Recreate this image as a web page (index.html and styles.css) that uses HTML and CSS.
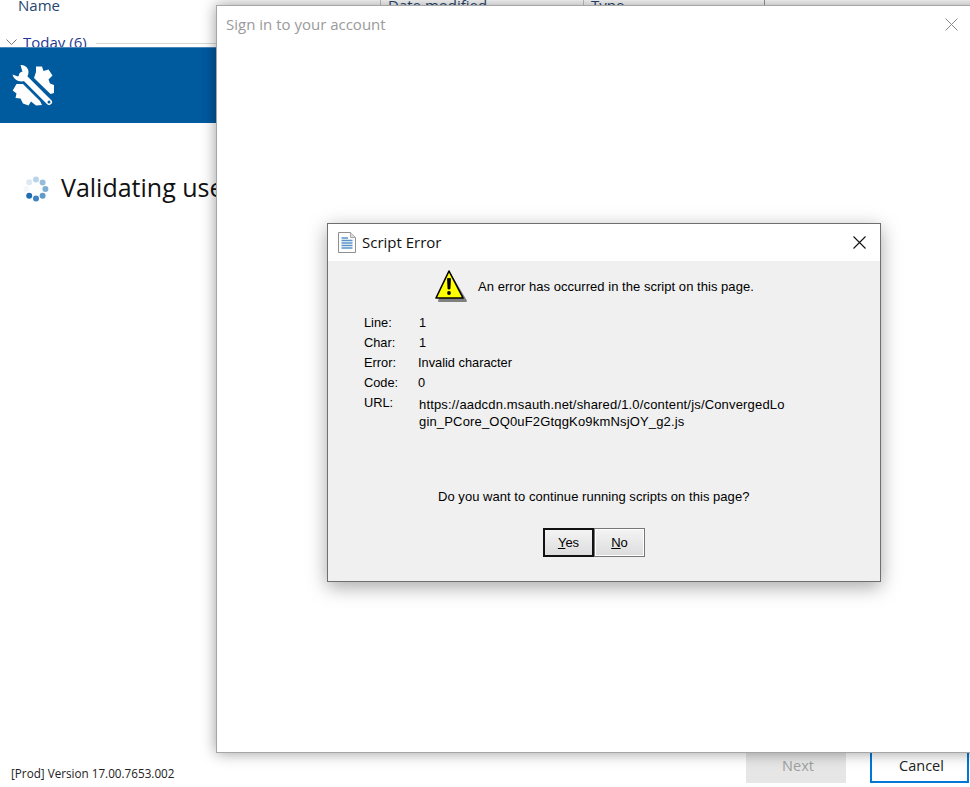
FILE: index.html
```html
<!DOCTYPE html>
<html lang="en">
<head>
<meta charset="utf-8">
<title>Script Error</title>
<link rel="stylesheet" href="styles.css">
</head>
<body>
<div class="desktop">
  <div class="app">
    <div class="explorer">
      <div class="columns">
        <span class="col col-name">Name</span>
        <span class="col col-date">Date modified</span>
        <span class="col col-type">Type</span>
      </div>
      <div class="group">
        <svg class="chevron" width="11" height="6" viewBox="0 0 11 6"><path d="M.5.5l5 5 5-5" fill="none" stroke="#777" stroke-width="1"/></svg>
        <span class="group-label">Today (6)</span>
        <span class="group-rule"></span>
      </div>
    </div>
    <header class="band">
      <svg class="tools" width="42" height="43" viewBox="0 0 42 43">
        <path d="M24 2.500H30L31.500 7L36.500 5.500L40.500 11.500L36.500 15.500L38 19.500L42 21V29L38.500 30L22 14L24 8Z" fill="#fff"/>
        <path d="M4.500 20L.7 26.500L4.500 29.500L3.500 34L8.500 34.500L11 39.500L16.500 41.500L19 37.500L24 41.500L30 41L28 37L11 20Z" fill="#fff"/>
        <path d="M10 11L37 38" stroke="#fff" stroke-width="6" stroke-linecap="round" fill="none"/>
        <path d="M8.500 1C12.500 .5 16.500 3.500 16.500 8C16.500 10 16 11 15.500 12L12.500 17C8 18.500 2 16.500 .5 10.500L6 12.500L10.500 8Z" fill="#fff"/>
        <circle cx="37" cy="38" r="1.500" fill="#005a9e"/>
      </svg>
    </header>
    <main class="status">
      <svg class="spinner" width="26" height="26" viewBox="0 0 26 26">
        <circle cx="3.300" cy="13" r="3" fill="#f4f8fb"/>
        <circle cx="6.200" cy="6.200" r="3" fill="#dce9f3"/>
        <circle cx="13" cy="3.500" r="3" fill="#b9d3e8"/>
        <circle cx="19.600" cy="6.400" r="3" fill="#95bcdc"/>
        <circle cx="22.400" cy="13" r="3" fill="#7eaed4"/>
        <circle cx="19.600" cy="19.800" r="3" fill="#5f9ac9"/>
        <circle cx="13" cy="22.600" r="3" fill="#3f84bf"/>
        <circle cx="6.200" cy="19.800" r="3" fill="#1f6cb0"/>
      </svg>
      <span class="status-text">Validating user</span>
    </main>
    <footer class="footer">
      <span class="version">[Prod] Version 17.00.7653.002</span>
      <div class="actions">
        <button class="btn btn-next" type="button">Next</button>
        <button class="btn btn-cancel" type="button">Cancel</button>
      </div>
    </footer>
  </div>

  <section class="signin">
    <div class="signin-bar">
      <span class="signin-title">Sign in to your account</span>
      <svg class="signin-close" width="13" height="13" viewBox="0 0 13 13"><path d="M.5.5l12 12M12.500.5l-12 12" stroke="#8a8a8a" stroke-width="1" fill="none"/></svg>
    </div>
  </section>

  <section class="dialog">
    <div class="dialog-bar">
      <svg class="doc" width="18" height="21" viewBox="0 0 18 21">
        <path d="M.5.500H12.500L17.500 5.500V20.500H.5Z" fill="#fdfdfd" stroke="#8f8f8f"/>
        <path d="M12.500.5V5.500H17.500" fill="#dcdcdc" stroke="#a8a8a8"/>
        <path d="M3.500 6H10M3.500 8.500H14.500M3.500 11H14.500M3.500 13.500H14.500M3.500 16H14.500" stroke="#5a93c8" stroke-width="1.400"/>
      </svg>
      <span class="dialog-title">Script Error</span>
      <svg class="dialog-close" width="13" height="13" viewBox="0 0 13 13"><path d="M.5.5l12 12M12.500.5l-12 12" stroke="#111" stroke-width="1.100" fill="none"/></svg>
    </div>
    <div class="dialog-body">
      <div class="message">
        <svg class="warn" width="34" height="34" viewBox="0 0 34 34">
          <path d="M15 5L31 32H4Z" fill="#808080" stroke="#808080" stroke-width="2" stroke-linejoin="round"/>
          <path d="M14 2L28 29H1Z" fill="#ffff00" stroke="#000" stroke-width="1.600" stroke-linejoin="round"/>
          <path d="M12.500 9.500H15.500L15 20H13Z" fill="#000" stroke="#000" stroke-width=".8"/>
          <circle cx="14" cy="24" r="1.900" fill="#000"/>
        </svg>
        <span class="message-text">An error has occurred in the script on this page.</span>
      </div>
      <dl class="details">
        <div class="row"><dt>Line:</dt><dd>1</dd></div>
        <div class="row"><dt>Char:</dt><dd>1</dd></div>
        <div class="row"><dt>Error:</dt><dd class="shift">Invalid character</dd></div>
        <div class="row"><dt>Code:</dt><dd class="shift">0</dd></div>
        <div class="row"><dt>URL:</dt><dd class="url">https://aadcdn.msauth.net/shared/1.0/content/js/ConvergedLogin_PCore_OQ0uF2GtqgKo9kmNsjOY_g2.js</dd></div>
      </dl>
      <p class="question">Do you want to continue running scripts on this page?</p>
      <div class="choices">
        <button class="choice choice-yes" type="button"><u>Y</u>es</button>
        <button class="choice choice-no" type="button"><u>N</u>o</button>
      </div>
    </div>
  </section>
</div>
</body>
</html>
```

FILE: styles.css
```css
* { box-sizing: border-box; }

html, body {
  margin: 0;
  height: 100%;
  background: #fff;
}

.desktop {
  position: relative;
  width: 970px;
  height: 787px;
  overflow: hidden;
  font-family: "Open Sans", "Noto Sans", sans-serif;
}

.app {
  display: flex;
  flex-direction: column;
  height: 787px;
}

.explorer {
  height: 47px;
  overflow: hidden;
  flex: none;
}

.columns {
  display: flex;
  height: 14px;
  margin-top: -5px;
  font-size: 15px;
  line-height: 20px;
  color: #27476f;
}

.col { display: block; }
.col-name { width: 380px; padding-left: 18px; }
.col-date { width: 203px; padding-left: 7px; border-left: 1px solid #c8c8c8; }
.col-type { width: 182px; padding-left: 7px; border-left: 1px solid #c8c8c8; border-right: 1px solid #999; }

.group {
  display: flex;
  align-items: center;
  height: 20px;
  margin-top: 23px;
  padding-left: 6px;
}

.chevron { flex: none; }

.group-label {
  margin-left: 6px;
  font-size: 15px;
  line-height: 20px;
  color: #1f3a93;
  white-space: nowrap;
}

.group-rule {
  flex: 1;
  height: 1px;
  margin-left: 9px;
  margin-top: 3px;
  background: #d8d8d8;
}

.band {
  display: flex;
  align-items: center;
  flex: none;
  height: 76px;
  padding-left: 12px;
  background: #005a9e;
  border-top: 1px solid #4a86b8;
}

.status {
  display: flex;
  flex: 1;
  padding: 53px 0 0 23px;
  align-items: flex-start;
}

.spinner { flex: none; }

.status-text {
  margin-left: 12px;
  margin-top: -6px;
  font-size: 25px;
  line-height: 34px;
  color: #111;
  white-space: nowrap;
}

.footer {
  display: flex;
  align-items: flex-end;
  justify-content: space-between;
  flex: none;
  padding: 0 1px 4px 11px;
}

.version {
  margin-bottom: 2px;
  font-size: 11.700px;
  line-height: 16px;
  color: #222;
}

.actions {
  display: flex;
  gap: 24px;
}

.btn {
  width: 100px;
  height: 32px;
  font-family: inherit;
  font-size: 14.500px;
  padding: 0 0 4px 4px;
}

.btn-next {
  background: #e6e6e6;
  border: 0;
  color: #a0a0a0;
}

.btn-cancel {
  width: 99px;
  background: #fff;
  border: 2px solid #0078d7;
  color: #222;
}

.signin {
  position: absolute;
  left: 216px;
  top: 5px;
  width: 770px;
  height: 748px;
  background: #fff;
  border: 1px solid #a6a6a6;
  box-shadow: 0 0 14px rgba(0, 0, 0, .4);
}

.signin-bar {
  display: flex;
  align-items: center;
  height: 36px;
  padding: 0 0 0 9px;
}

.signin-title {
  font-size: 15px;
  color: #9a9a9a;
}

.signin-close {
  position: absolute;
  left: 728px;
  top: 12px;
}

.dialog {
  position: absolute;
  left: 327px;
  top: 223px;
  width: 554px;
  height: 359px;
  display: flex;
  flex-direction: column;
  background: #f0f0f0;
  border: 1px solid #6f6f6f;
  box-shadow: 0 5px 18px rgba(0, 0, 0, .35);
  font-family: "Liberation Sans", Arial, sans-serif;
  font-size: 13px;
  color: #000;
}

.dialog-bar {
  display: flex;
  align-items: center;
  flex: none;
  height: 37px;
  padding: 0 14px 0 10px;
  background: #fff;
}

.doc { flex: none; }

.dialog-title {
  flex: 1;
  margin-left: 6px;
  margin-bottom: 2px;
  font-family: "Open Sans", "Noto Sans", sans-serif;
  font-size: 15px;
  color: #111;
}

.dialog-body {
  display: flex;
  flex-direction: column;
  flex: 1;
  padding-left: 36px;
}

.message {
  display: flex;
  align-items: center;
  height: 34px;
  margin: 8px 0 0 71px;
}

.warn { flex: none; }

.message-text {
  margin-left: 9px;
  margin-top: 1px;
  letter-spacing: .04px;
}

.details {
  margin: 10px 0 0;
  font-size: 12.800px;
}

.row {
  display: flex;
  min-height: 20px;
  line-height: 20px;
}

.row dt {
  width: 55px;
  flex: none;
}

.row dd {
  margin: 0;
}

.row dd.shift { margin-left: -1px; }

.row dd.url {
  width: 368px;
  margin-top: 3px;
  font-size: 13px;
  line-height: 17px;
  letter-spacing: .17px;
  word-break: break-all;
}

.question {
  margin: 57px 0 0 74px;
  line-height: 20px;
  letter-spacing: .04px;
}

.choices {
  display: flex;
  margin: 21px 0 0 179px;
}

.choice {
  width: 51px;
  height: 29px;
  padding: 0;
  font-family: inherit;
  font-size: 13px;
  color: #000;
  background: linear-gradient(#f4f4f4, #dcdcdc);
}

.choice-yes {
  border: 2px solid #111;
}

.choice-no {
  border: 1px solid #777;
  box-shadow: inset 0 0 0 1px #fff;
}
```
